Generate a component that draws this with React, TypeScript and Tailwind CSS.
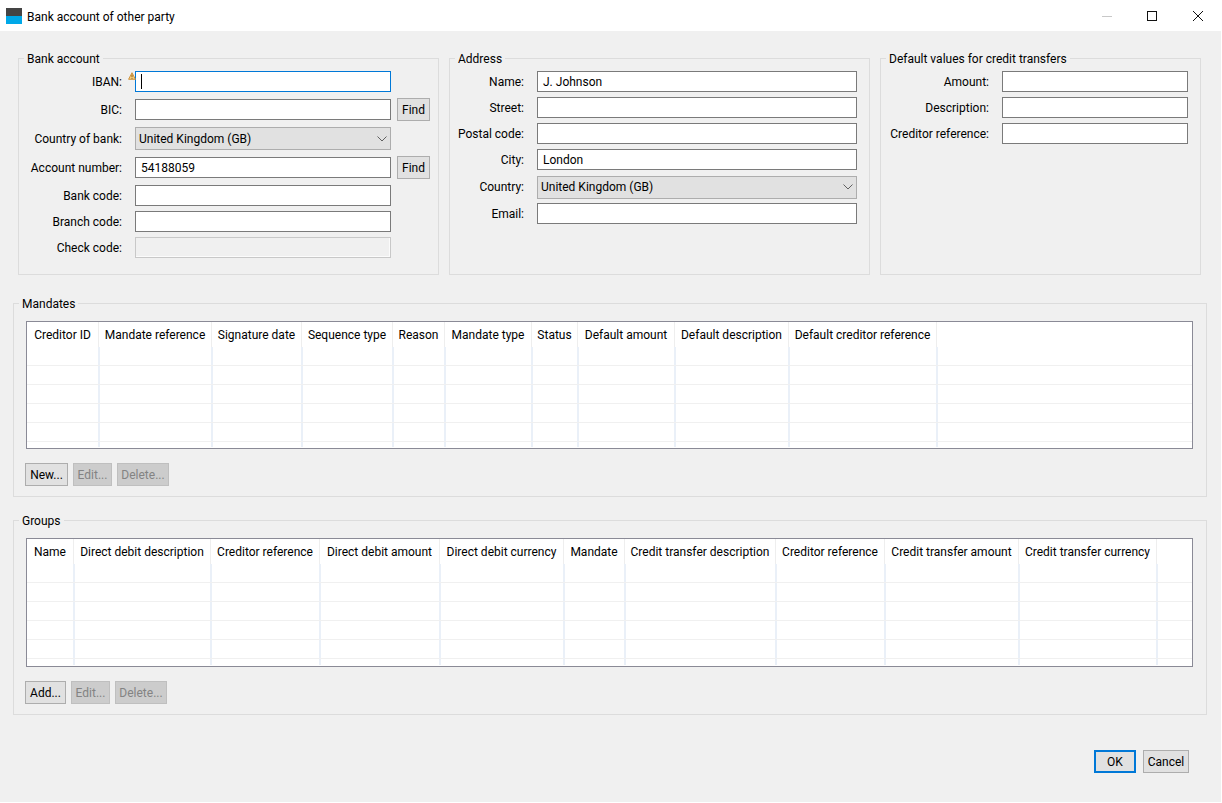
import React from "react";

const FONT = "font-['Roboto',sans-serif]";

function Label({ text, w }: { text: string; w: string }) {
  return <label className={`${w} shrink-0 text-right text-[12px] leading-[16px] text-black`}>{text}</label>;
}

function Input({ value, w, focused }: { value?: string; w: string; focused?: boolean }) {
  return (
    <div className={`${w} h-[21px] shrink-0 border ${focused ? "border-[#0078d7]" : "border-[#7a7a7a]"} bg-white pl-[5px] flex items-center text-[12px] text-black`}>
      {focused && <span className="w-px h-[15px] bg-black" />}
      {value}
    </div>
  );
}

function Select({ value, w }: { value: string; w: string }) {
  return (
    <div className={`${w} h-[23px] shrink-0 border border-[#adadad] bg-[#e1e1e1] pl-[3px] pr-[3px] flex items-center justify-between text-[12px] text-black`}>
      <span>{value}</span>
      <svg width="10" height="6" viewBox="0 0 10 6" fill="none" stroke="#606060" strokeWidth="1">
        <path d="M0.5 0.5 L5 5 L9.5 0.5" />
      </svg>
    </div>
  );
}

function Btn({ text, w, disabled, primary }: { text: string; w: string; disabled?: boolean; primary?: boolean }) {
  const tone = disabled
    ? "border border-[#bfbfbf] bg-[#cccccc] text-[#838383]"
    : primary
    ? "border-2 border-[#0078d7] bg-[#e1e1e1] text-black"
    : "border border-[#adadad] bg-[#e1e1e1] text-black";
  return <div className={`${w} h-[23px] shrink-0 flex items-center justify-center text-[12px] ${tone}`}>{text}</div>;
}

function Row({ gap, mb, children }: { gap: string; mb: string; children: React.ReactNode }) {
  return <div className={`flex items-center h-[21px] ${gap} ${mb}`}>{children}</div>;
}

function Box({ title, className, children }: { title: string; className: string; children: React.ReactNode }) {
  return (
    <fieldset className={`border border-[#dcdcdc] ${className}`}>
      <legend className="ml-[5px] px-[3px] text-[12px] leading-[14px] text-black relative top-px">{title}</legend>
      {children}
    </fieldset>
  );
}

function Table({ cols, heads, h, tail }: { cols: string; heads: string[]; h: string; tail: string }) {
  const cells = heads.length + 1;
  const rows = [0, 1, 2, 3, 4];
  return (
    <div className={`w-[1167px] ${h} border border-[#8a8a96] bg-white overflow-hidden`}>
      <div className={`grid ${cols}`}>
        {heads.map((text, i) => (
          <div key={i} className="h-[25px] border-r border-[#eeeeee] flex items-center justify-center text-[12px] text-black whitespace-nowrap">
            {text}
          </div>
        ))}
        <div className="h-[25px]" />
        {rows.map((r) =>
          Array.from({ length: cells }).map((_, i) => (
            <div key={`${r}-${i}`} className={`h-[19px] border-b border-[#f0f0f0] ${i < cells - 1 ? "border-r-2 -mr-px border-r-[#eaf0f8]" : ""}`} />
          ))
        )}
        {Array.from({ length: cells }).map((_, i) => (
          <div key={i} className={`${tail} ${i < cells - 1 ? "border-r-2 -mr-px border-r-[#eaf0f8]" : ""}`} />
        ))}
      </div>
    </div>
  );
}

export default function App() {
  return (
    <div className={`w-[1222px] h-[803px] bg-white overflow-hidden ${FONT}`}>
      <div className="h-[31px] flex items-center bg-white pl-[6px]">
        <div className="w-[16px] h-[16px] flex flex-col shrink-0">
          <div className="h-[8px] bg-[#444444]" />
          <div className="h-[8px] bg-[#00a8e8]" />
        </div>
        <span className="ml-[5px] text-[12px] text-black relative top-px">Bank account of other party</span>
        <div className="ml-auto flex items-center">
          <svg className="mr-[35px]" width="10" height="10" viewBox="0 0 10 10" stroke="#c8c8c8"><path d="M0 5.5H10" /></svg>
          <svg className="mr-[36px]" width="10" height="10" viewBox="0 0 10 10" fill="none" stroke="#111"><rect x="0.5" y="0.5" width="9" height="9" /></svg>
          <svg className="mr-[19px]" width="10" height="10" viewBox="0 0 10 10" fill="none" stroke="#111"><path d="M0 0L10 10M10 0L0 10" /></svg>
        </div>
      </div>

      <div className="w-[1221px] h-[771px] bg-[#f0f0f0] pt-[20px] flex flex-col">
        <div className="flex gap-[10px] ml-[18px]">
          <Box title="Bank account" className="w-[421px] h-[224px]">
            <div className="pt-[6px] relative">
              <svg className="absolute left-[109px] top-[7px]" width="8" height="8" viewBox="0 0 8 8">
                <path d="M4 0.7L7.4 7.3H0.6Z" fill="#f7cf7c" stroke="#cf9440" strokeWidth="1" strokeLinejoin="round" />
                <path d="M4 2.6V5M4 5.8V6.8" stroke="#8a5a18" strokeWidth="1" />
              </svg>
              <Row gap="gap-[13px]" mb="mb-[7px]"><Label w="w-[103px]" text="IBAN:" /><Input w="w-[256px]" focused /></Row>
              <Row gap="gap-[13px]" mb="mb-[7px]"><Label w="w-[103px]" text="BIC:" /><Input w="w-[256px]" /><div className="-ml-[7px]"><Btn w="w-[33px]" text="Find" /></div></Row>
              <div className="flex items-center gap-[13px] h-[23px] mb-[7px]"><Label w="w-[103px]" text="Country of bank:" /><Select w="w-[256px]" value="United Kingdom (GB)" /></div>
              <Row gap="gap-[13px]" mb="mb-[7px]"><Label w="w-[103px]" text="Account number:" /><Input w="w-[256px]" value="54188059" /><div className="-ml-[7px]"><Btn w="w-[33px]" text="Find" /></div></Row>
              <Row gap="gap-[13px]" mb="mb-[5px]"><Label w="w-[103px]" text="Bank code:" /><Input w="w-[256px]" /></Row>
              <Row gap="gap-[13px]" mb="mb-[5px]"><Label w="w-[103px]" text="Branch code:" /><Input w="w-[256px]" /></Row>
              <Row gap="gap-[13px]" mb="mb-0">
                <Label w="w-[103px]" text="Check code:" />
                <div className="w-[256px] h-[21px] border border-[#c8c8c8] bg-[#f0f0f0] shadow-[inset_-1px_-1px_0_#fbfbfb]" />
              </Row>
            </div>
          </Box>
          <Box title="Address" className="w-[421px] h-[224px]">
            <div className="pt-[6px]">
              <Row gap="gap-[13px]" mb="mb-[5px]"><Label w="w-[74px]" text="Name:" /><Input w="w-[320px]" value="J. Johnson" /></Row>
              <Row gap="gap-[13px]" mb="mb-[5px]"><Label w="w-[74px]" text="Street:" /><Input w="w-[320px]" /></Row>
              <Row gap="gap-[13px]" mb="mb-[5px]"><Label w="w-[74px]" text="Postal code:" /><Input w="w-[320px]" /></Row>
              <Row gap="gap-[13px]" mb="mb-[6px]"><Label w="w-[74px]" text="City:" /><Input w="w-[320px]" value="London" /></Row>
              <div className="flex items-center gap-[13px] h-[22px] mb-[5px]"><Label w="w-[74px]" text="Country:" /><Select w="w-[320px]" value="United Kingdom (GB)" /></div>
              <Row gap="gap-[13px]" mb="mb-0"><Label w="w-[74px]" text="Email:" /><Input w="w-[320px]" /></Row>
            </div>
          </Box>
          <Box title="Default values for credit transfers" className="w-[321px] h-[224px]">
            <div className="pt-[6px]">
              <Row gap="gap-[13px]" mb="mb-[5px]"><Label w="w-[108px]" text="Amount:" /><Input w="w-[186px]" /></Row>
              <Row gap="gap-[13px]" mb="mb-[5px]"><Label w="w-[108px]" text="Description:" /><Input w="w-[186px]" /></Row>
              <Row gap="gap-[13px]" mb="mb-0"><Label w="w-[108px]" text="Creditor reference:" /><Input w="w-[186px]" /></Row>
            </div>
          </Box>
        </div>

        <Box title="Mandates" className="ml-[13px] mt-[21px] w-[1194px] h-[201px]">
          <div className="pt-[11px] pl-[12px]">
            <Table
              h="h-[128px]"
              tail="h-[5px]"
              cols="grid-cols-[72px_113px_90px_91px_52px_87px_46px_97px_114px_148px_1fr]"
              heads={["Creditor ID", "Mandate reference", "Signature date", "Sequence type", "Reason", "Mandate type", "Status", "Default amount", "Default description", "Default creditor reference"]}
            />
            <div className="flex gap-[5px] mt-[14px] -ml-px">
              <Btn w="w-[43px]" text="New..." />
              <Btn w="w-[39px]" text="Edit..." disabled />
              <Btn w="w-[52px]" text="Delete..." disabled />
            </div>
          </div>
        </Box>

        <Box title="Groups" className="ml-[13px] mt-[16px] w-[1194px] h-[202px]">
          <div className="pt-[11px] pl-[12px]">
            <Table
              h="h-[129px]"
              tail="h-[6px]"
              cols="grid-cols-[47px_137px_109px_120px_124px_61px_151px_109px_134px_138px_1fr]"
              heads={["Name", "Direct debit description", "Creditor reference", "Direct debit amount", "Direct debit currency", "Mandate", "Credit transfer description", "Creditor reference", "Credit transfer amount", "Credit transfer currency"]}
            />
            <div className="flex gap-[5px] mt-[14px] -ml-px">
              <Btn w="w-[41px]" text="Add..." />
              <Btn w="w-[39px]" text="Edit..." disabled />
              <Btn w="w-[52px]" text="Delete..." disabled />
            </div>
          </div>
        </Box>

        <div className="flex justify-end gap-[7px] mt-[35px] pr-[32px]">
          <Btn w="w-[42px]" text="OK" primary />
          <Btn w="w-[46px]" text="Cancel" />
        </div>
      </div>
    </div>
  );
}
